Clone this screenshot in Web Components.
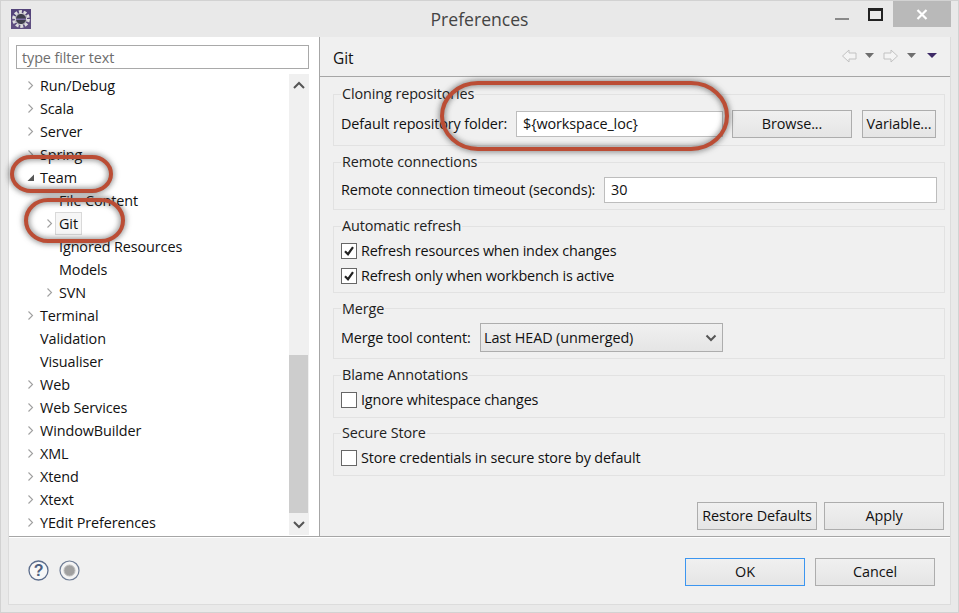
<!DOCTYPE html>
<html><head><meta charset="utf-8">
<style>
html,body{margin:0;padding:0;background:#e9e9e9}
body{width:959px;height:613px;overflow:hidden;font:14.4px/20px "Open Sans","Noto Sans",sans-serif;color:#111;letter-spacing:-.1px}
</style></head><body>
<pref-window></pref-window>
<script>
function el(name,css,html){
  customElements.define(name,class extends HTMLElement{
    connectedCallback(){
      if(this.shadowRoot)return;
      const r=this.attachShadow({mode:'open'});
      r.innerHTML='<style>'+css+'</style>'+(typeof html==='function'?html(this):html);
    }
  });
}
const chev='<svg width="7" height="11" viewBox="0 0 7 11"><path d="M1.500 1.500l4 4-4 4" fill="none" stroke="#a0a0a0" stroke-width="1.100"/></svg>';
const open='<svg width="9" height="9" viewBox="0 0 9 9"><path d="M8 1.500V8H1.500z" fill="#555"/></svg>';

el('tree-row',`:host{display:flex;align-items:center;height:23px;white-space:nowrap;position:relative}
.a{width:12px;display:flex;justify-content:center;align-items:center;flex:none;margin-right:1px}
.t{padding:0 3px;height:23px;line-height:22px;box-sizing:border-box;border:1px solid transparent}
:host([sel]) .t{background:#f6f6f6;border-color:#d9d9d9}`,
 h=>{const l=+h.getAttribute('level')||0;const k=h.getAttribute('k');
   return `<span style="width:${l*19+15}px;flex:none"></span><span class="a">${k==='c'?chev:k==='o'?open:''}</span><span class="t" style="margin-left:-1px"><slot></slot></span>`});

el('tree-scroll',`:host{display:flex;flex-direction:column;width:20px;background:#f0f0f0;flex:none}
.b{height:22px;display:flex;align-items:center;justify-content:center;flex:none}
.s{flex:1;display:flex;flex-direction:column;justify-content:flex-end}
.th{height:158px;background:#cdcdcd;width:19px}`,
`<div class="b"><svg width="14" height="9" viewBox="0 0 14 9"><path d="M2 7l5-5 5 5" fill="none" stroke="#555" stroke-width="2"/></svg></div>
<div class="s"><div class="th"></div></div>
<div class="b"><svg width="14" height="9" viewBox="0 0 14 9"><path d="M2 2l5 5 5-5" fill="none" stroke="#555" stroke-width="2"/></svg></div>`);

el('title-bar',`:host{display:flex;height:37px;position:relative;box-sizing:border-box;border-top:1px solid #d2d2d2;align-items:flex-start;padding-left:10px}
.ic{width:20px;height:20px;margin-top:8px;flex:none}
.t{flex:1;text-align:center;font-size:17.6px;line-height:36px;color:#444;padding-left:93px;letter-spacing:0}
.min{width:14px;height:2px;background:#8a8a8a;margin:17px 19px 0 0}
.max{width:15px;height:13px;box-sizing:border-box;border:2px solid #222;border-top-width:3px;margin:7px 10px 0 0}
.x{width:58px;height:26px;background:#b9b9b9;margin-right:7px;display:flex;align-items:center;justify-content:center}`,
`<svg class="ic" viewBox="0 0 20 20"><rect width="20" height="20" fill="#5f4f80"/><rect width="20" height="10" fill="#54447a"/>
<circle cx="10" cy="10" r="7.400" fill="none" stroke="#dddddd" stroke-width="3" stroke-dasharray="3 1.650"/><circle cx="10" cy="10" r="5.600" fill="#3e3e4c" stroke="#d4d4d4" stroke-width="1"/><rect x="5" y="9.500" width="10" height="1.500" fill="#7d6ea3"/></svg>
<div class="t"><slot></slot></div><div class="min"></div><div class="max"></div>
<div class="x"><svg width="12" height="11" viewBox="0 0 12 11"><path d="M1.500 1l9 9M10.500 1l-9 9" stroke="#fff" stroke-width="2.200" fill="none"/></svg></div>`);

el('nav-tools',`:host{display:flex;align-items:center;flex:none;margin-bottom:4px}svg{display:block}`,
`<svg width="97" height="14" viewBox="0 0 97 14">
<path d="M8 1L1.500 7 8 13V10H15V4H8z" fill="#f4f4f4" stroke="#c2c2c2"/><path d="M24 4h9l-4.500 5z" fill="#6e6e6e"/>
<path d="M50 1L56.500 7 50 13V10H43V4H50z" fill="#f4f4f4" stroke="#c2c2c2"/><path d="M66 4h9l-4.500 5z" fill="#6e6e6e"/>
<path d="M86 4h10l-5 5z" fill="#3d2a66"/></svg>`);

el('field-group',`:host{display:block;position:relative;box-sizing:border-box;border:1px solid #e2e2e2;margin:0}
.l{position:absolute;left:7px;background:#f0f0f0;padding:0 1px;line-height:20px;height:20px;color:#222}
.c{display:block}`,
h=>`<div class="l" style="top:${h.getAttribute('ltop')||-11}px">${h.getAttribute('label')}</div><div class="c"><slot></slot></div>`);

el('form-row',`:host{display:flex;align-items:center;gap:0;padding:0 7px}`,`<slot></slot>`);

el('text-box',`:host{display:flex;align-items:center;box-sizing:border-box;height:26px;background:#fff;border:1px solid #bdbdbd;padding:0 6px;flex:none}`,`<slot></slot>`);

el('push-button',`:host{display:flex;align-items:center;justify-content:center;box-sizing:border-box;height:28px;border:1px solid #adadad;background:linear-gradient(#f0f0f0,#e5e5e5);flex:none;white-space:nowrap}
:host([def]){border-color:#3c96f0}`,`<slot></slot>`);

el('check-box',`:host{display:flex;align-items:center;height:25px;padding-left:7px;letter-spacing:-.17px}
.b{width:16px;height:16px;box-sizing:border-box;border:1px solid #666;background:#fff;margin-right:4px;flex:none;display:flex;align-items:center;justify-content:center}`,
h=>`<span class="b">${h.hasAttribute('checked')?'<svg width="12" height="12" viewBox="0 0 12 12"><path d="M2 6.200l3 3 5-7" fill="none" stroke="#222" stroke-width="2.200"/></svg>':''}</span><slot></slot>`);

el('select-box',`:host{display:flex;align-items:center;justify-content:space-between;box-sizing:border-box;height:29px;border:1px solid #adadad;background:linear-gradient(#f0f0f0,#e5e5e5);padding:0 5px 0 3px;flex:none}`,
`<slot></slot><svg width="12" height="8" viewBox="0 0 12 8"><path d="M1.500 1.500L6 6l4.500-4.500" fill="none" stroke="#555" stroke-width="2"/></svg>`);

el('callout-ring',`:host{position:absolute;display:block;pointer-events:none}svg{display:block;overflow:visible;filter:drop-shadow(0 0 3px rgba(40,40,40,.8))}`,
h=>{const w=+h.getAttribute('w'),H=+h.getAttribute('h'),r=+h.getAttribute('r');
 return `<svg width="${w}" height="${H}" viewBox="0 0 ${w} ${H}"><rect x="2" y="2" width="${w-4}" height="${H-4}" rx="${r}" ry="${Math.min(r,(H-4)/2)}" fill="none" stroke="#bb4d35" stroke-width="4"/></svg>`});

el('help-icons',`:host{display:flex;gap:10px;align-items:center;margin-top:2px}svg{display:block}`,
`<svg width="21" height="21" viewBox="0 0 21 21"><circle cx="10.500" cy="10.500" r="9.500" fill="#f7f7f7" stroke="#5c6d8c" stroke-width="1.300"/><text x="10.500" y="16" text-anchor="middle" font-family="Liberation Sans" font-weight="700" font-size="16" fill="#4d5f80">?</text></svg>
<svg width="21" height="21" viewBox="0 0 21 21"><circle cx="10.500" cy="10.500" r="9.500" fill="#f4f4f4" stroke="#6f7d95" stroke-width="1.200"/><circle cx="10.500" cy="10.500" r="5.500" fill="#a0a0a0" stroke="#bdbdbd"/></svg>`);

el('pref-window',`:host{display:flex;flex-direction:column;width:959px;height:613px;box-sizing:border-box;position:relative;border-left:1px solid #d2d2d2;border-right:1px solid #d2d2d2;border-bottom:1px solid #d2d2d2}
.frame{margin:0 7px 0 7px;height:568px;box-sizing:border-box;border-left:1px solid #dcdcdc;border-right:1px solid #dcdcdc;border-bottom:1px solid #dcdcdc;display:flex;flex-direction:column;background:#f0f0f0}
.main{display:flex;height:499px;border-bottom:1px solid #a6a6a6;flex:none}
.left{background:#fff;border-right:1px solid #a6a6a6;flex:none;box-sizing:content-box;padding:8px 10px 0 7px;width:293px;display:flex;flex-direction:column}
.filter{height:24px;box-sizing:border-box;border:1px solid #a9a9a9;padding:0 5px;line-height:23px;color:#6e6e6e;flex:none}
.treewrap{display:flex;margin-top:5px;flex:1;min-height:0;margin-left:-7px;margin-bottom:1px}
.tree{flex:1;min-width:0}
.right{flex:1;min-width:0;padding:0 5px 0 13px;display:flex;flex-direction:column}
.head{height:37px;border-bottom:1px solid #a6a6a6;margin:0 -5px 0 -13px;padding:2px 12px 0 13px;display:flex;justify-content:space-between;align-items:center;font-size:15.500px;flex:none}
.groups{display:flex;flex-direction:column}
.actions{display:flex;justify-content:flex-end;gap:7px;margin-top:26px;padding-right:1px}
.foot{flex:1;border-top:1px solid #fff;display:flex;align-items:flex-start;justify-content:space-between;padding:20px 15px 0 19px}
.btns{display:flex;gap:10px}
`,
`<title-bar>Preferences</title-bar>
<div class="frame">
 <div class="main">
  <div class="left">
   <div class="filter">type filter text</div>
   <div class="treewrap">
    <div class="tree">
     <tree-row k="c">Run/Debug</tree-row><tree-row k="c">Scala</tree-row><tree-row k="c">Server</tree-row><tree-row k="c">Spring</tree-row>
     <tree-row k="o">Team</tree-row><tree-row level="1">File Content</tree-row><tree-row level="1" k="c" sel>Git</tree-row>
     <tree-row level="1">Ignored Resources</tree-row><tree-row level="1">Models</tree-row><tree-row level="1" k="c">SVN</tree-row>
     <tree-row k="c">Terminal</tree-row><tree-row>Validation</tree-row><tree-row>Visualiser</tree-row>
     <tree-row k="c">Web</tree-row><tree-row k="c">Web Services</tree-row><tree-row k="c">WindowBuilder</tree-row>
     <tree-row k="c">XML</tree-row><tree-row k="c">Xtend</tree-row><tree-row k="c">Xtext</tree-row><tree-row k="c">YEdit Preferences</tree-row>
    </div>
    <tree-scroll></tree-scroll>
   </div>
  </div>
  <div class="right">
   <div class="head"><span>Git</span><nav-tools></nav-tools></div>
   <div class="groups">
    <field-group label="Cloning repositories" style="height:52px;margin-top:17px">
      <form-row style="padding-top:15px"><span style="width:175px">Default repository folder:</span><text-box style="width:207px">\${workspace_loc}</text-box><push-button style="width:120px;margin-left:9px">Browse...</push-button><push-button style="width:74px;margin-left:10px">Variable...</push-button></form-row>
    </field-group>
    <field-group label="Remote connections" style="height:48px;margin-top:16px">
      <form-row style="padding-top:14px"><span style="width:263px">Remote connection timeout (seconds):</span><text-box style="width:333px">30</text-box></form-row>
    </field-group>
    <field-group label="Automatic refresh" style="height:67px;margin-top:16px">
      <div style="padding-top:11px"><check-box checked>Refresh resources when index changes</check-box><check-box checked>Refresh only when workbench is active</check-box></div>
    </field-group>
    <field-group label="Merge" ltop="-10" style="height:51px;margin-top:15px">
      <form-row style="padding-top:14px"><span style="width:139px">Merge tool content:</span><select-box style="width:243px">Last HEAD (unmerged)</select-box></form-row>
    </field-group>
    <field-group label="Blame Annotations" style="height:43px;margin-top:16px">
      <div style="padding-top:11px"><check-box>Ignore whitespace changes</check-box></div>
    </field-group>
    <field-group label="Secure Store" style="height:43px;margin-top:15px">
      <div style="padding-top:11px"><check-box>Store credentials in secure store by default</check-box></div>
    </field-group>
   </div>
   <div class="actions"><push-button style="width:120px">Restore Defaults</push-button><push-button style="width:120px">Apply</push-button></div>
  </div>
 </div>
 <div class="foot"><help-icons></help-icons><div class="btns"><push-button def style="width:120px">OK</push-button><push-button style="width:120px">Cancel</push-button></div></div>
</div>
<callout-ring w="103" h="38" r="19" style="left:9px;top:155px"></callout-ring>
<callout-ring w="101" h="45" r="22" style="left:23px;top:198px"></callout-ring>
<callout-ring w="289" h="70" r="36" style="left:439px;top:81px"></callout-ring>`);
</script>
</body></html>
